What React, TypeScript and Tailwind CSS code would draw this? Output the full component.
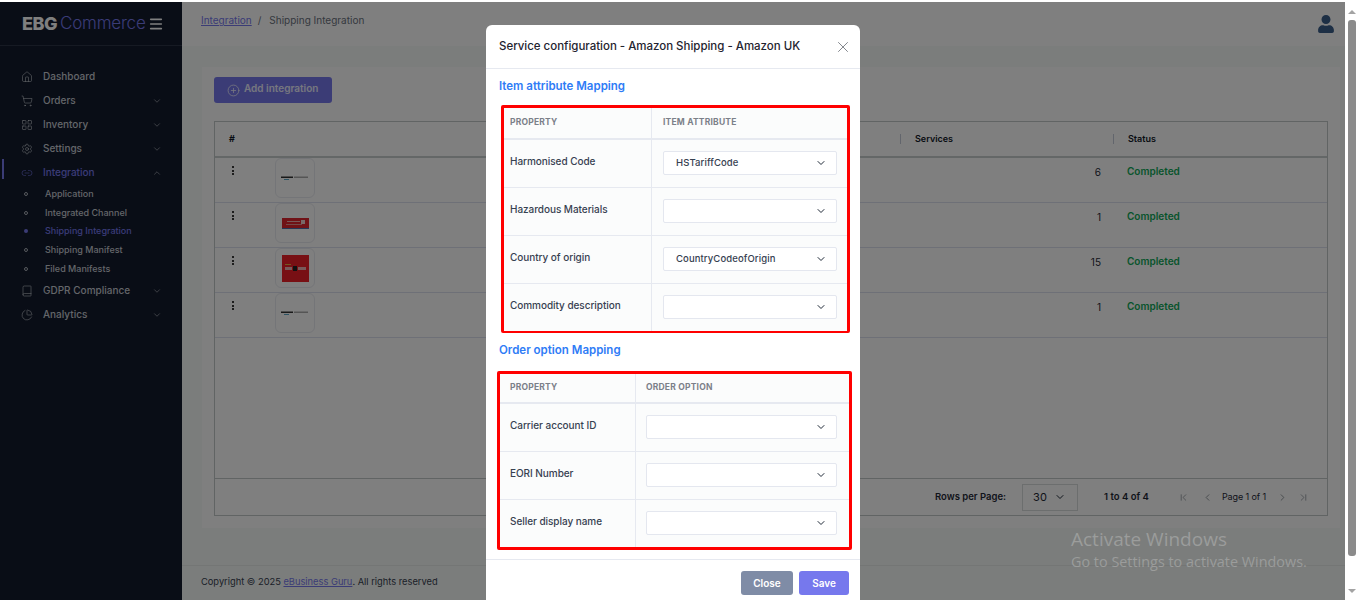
import {
  Book,
  ChevronDown,
  ChevronFirst,
  ChevronLast,
  ChevronLeft,
  ChevronRight,
  ChevronUp,
  CirclePlus,
  House,
  LayoutGrid,
  Link2,
  Menu,
  PieChart,
  Settings,
  ShoppingCart,
  X,
} from "lucide-react";
import { FaUser } from "react-icons/fa";

const font = "font-['Inter','Noto_Sans',sans-serif]";

const subItems = [
  { label: "Application", h: "h-[19px]" },
  { label: "Integrated Channel", h: "h-[19px]" },
  { label: "Shipping Integration", h: "h-[18px]", active: true },
  { label: "Shipping Manifest", h: "h-[19px]" },
  { label: "Filed Manifests", h: "h-[19px]" },
];

const NavItem = ({ icon: Icon, label, chevron, active }: any) => (
  <div className="relative flex h-6 items-center pl-[21px] pr-[20px]">
    {active && <div className="absolute -top-[2px] left-[2px] h-5 w-[2px] bg-[#7678ed]" />}
    <Icon size={12} strokeWidth={1.2} className={active ? "text-[#7678ed]" : "text-[#c8ccd4]"} />
    <span className={`ml-[10px] -mt-[2px] flex-1 text-[10px] font-medium ${active ? "text-[#7678ed]" : "text-[#c8ccd4]"}`}>
      {label}
    </span>
    {chevron === "down" && <ChevronDown size={10} className="text-[#8b909c]" />}
    {chevron === "up" && <ChevronUp size={10} className="text-[#8b909c]" />}
  </div>
);

const Sidebar = () => (
  <div className="flex w-[182px] shrink-0 flex-col bg-[#121a2c]">
    <div className="flex h-[44px] items-center border-b border-[#2c3446] pl-[22px] pr-[18px]">
      <span className="text-[18px] font-extrabold tracking-[-0.5px] text-white">EBG</span>
      <span className="ml-[3px] flex-1 text-[17px] font-light tracking-[-0.2px] text-[#7678ed]">Commerce</span>
      <Menu size={16} strokeWidth={2.4} className="text-white" />
    </div>
    <div className="mt-[19px] flex flex-col">
      <NavItem icon={House} label="Dashboard" />
      <NavItem icon={ShoppingCart} label="Orders" chevron="down" />
      <NavItem icon={LayoutGrid} label="Inventory" chevron="down" />
      <NavItem icon={Settings} label="Settings" chevron="down" />
      <NavItem icon={Link2} label="Integration" chevron="up" active />
      <div className="-mt-[1px] mb-[1px] flex flex-col">
        {subItems.map((s) => (
          <div key={s.label} className={`flex items-center pl-[24px] ${s.h}`}>
            <span className={`h-[4px] w-[4px] rounded-full ${s.active ? "bg-[#7678ed]" : "border border-[#b0b4be]"}`} />
            <span className={`ml-[17px] text-[9px] font-medium ${s.active ? "text-[#7678ed]" : "text-[#c8ccd4]"}`}>
              {s.label}
            </span>
          </div>
        ))}
      </div>
      <NavItem icon={Book} label="GDPR Compliance" chevron="down" />
      <NavItem icon={PieChart} label="Analytics" chevron="down" />
    </div>
  </div>
);

const AmazonLogo = () => (
  <svg width="28" height="5" viewBox="0 0 28 5">
    <rect x="0" y="0.5" width="12" height="1.5" fill="#333" />
    <rect x="13" y="0.5" width="14" height="1.5" fill="#aaa" />
    <rect x="3" y="3" width="5" height="1" fill="#5aa7c7" />
  </svg>
);

const BannerLogo = () => (
  <svg width="27" height="11" viewBox="0 0 27 11">
    <rect width="27" height="11" fill="#e0242e" />
    <rect y="10" width="27" height="1" fill="#4a6fb0" />
    <rect x="5" y="3" width="13" height="1" fill="#eeb0b0" />
    <rect x="19" y="2" width="4" height="4" fill="#f3d0d0" />
    <rect x="4" y="6" width="16" height="1" fill="#e59090" />
  </svg>
);

const DropLogo = () => (
  <svg width="27" height="27" viewBox="0 0 27 27">
    <rect width="27" height="27" fill="#f02028" />
    <rect x="3" y="12" width="7" height="3" fill="#f0b4b4" />
    <rect x="11" y="11" width="4" height="5" fill="#222" />
    <rect x="16" y="12" width="8" height="3" fill="#f0b4b4" />
    <rect x="3" y="9" width="6" height="1" fill="#e8b040" />
  </svg>
);

const rows = [
  { logo: <AmazonLogo />, count: "6" },
  { logo: <BannerLogo />, count: "1" },
  { logo: <DropLogo />, count: "15" },
  { logo: <AmazonLogo />, count: "1" },
];

const cols = "grid grid-cols-[47px_212px_426px_213px_1fr]";

const HeadCell = ({ label }: { label?: string }) => (
  <div className="flex h-full items-center">
    <span className="h-[10px] w-px bg-[#c5cbd8]" />
    <span className="ml-[14px] text-[9px] font-semibold text-[#111827]">{label}</span>
  </div>
);

const DataTable = () => (
  <div className="mx-3 mt-[18px] flex h-[395px] flex-col border border-[#c2c8c8]">
    <div className={`${cols} h-[36px] border-b-2 border-[#c9cfcf]`}>
      <div className="flex items-center pl-[14px] text-[9px] font-bold text-[#111827]">#</div>
      <div />
      <div />
      <HeadCell label="Services" />
      <HeadCell label="Status" />
    </div>
    <div className="flex-1">
      {rows.map((r, i) => (
        <div key={i} className={`${cols} h-[45px] border-b border-[#dde1ee]`}>
          <div className="pl-[17px] pt-[8px]">
            <div className="flex w-[2px] flex-col gap-[1.5px]">
              <span className="h-[2px] w-[2px] bg-[#3a3a3a]" />
              <span className="h-[2px] w-[2px] bg-[#3a3a3a]" />
              <span className="h-[2px] w-[2px] bg-[#3a3a3a]" />
            </div>
          </div>
          <div className="pl-[13px]">
            <div className="flex h-[40px] w-[40px] items-center justify-center rounded-md border border-[#e9ebf0] bg-white">
              {r.logo}
            </div>
          </div>
          <div />
          <div className="pr-[12px] pt-[8px] text-right text-[10px] leading-[13px] text-[#1f2937]">{r.count}</div>
          <div className="pl-[14px] pt-[7px] text-[10px] font-semibold leading-[13px] text-[#0fa958]">Completed</div>
        </div>
      ))}
    </div>
    <div className="flex h-[37px] items-center justify-end border-t border-[#c2c8c8] pr-[18px] text-[9.5px] text-[#1f2937]">
      <span className="font-semibold">Rows per Page:</span>
      <div className="ml-[16px] flex h-[27px] w-[56px] items-center justify-between border border-[#d8dcdc] pl-[10px] pr-[11px] text-[11px]">
        30 <ChevronDown size={12} />
      </div>
      <span className="ml-[26px] font-semibold">1 to 4 of 4</span>
      <ChevronFirst size={11} className="ml-[29px] text-[#9aa0a6]" />
      <ChevronLeft size={11} className="ml-[13px] text-[#8a9096]" />
      <span className="ml-[9px] text-[9px] tracking-[-0.1px]">Page 1 of 1</span>
      <ChevronRight size={11} className="ml-[11px] text-[#8a9096]" />
      <ChevronLast size={11} className="ml-[10px] text-[#9aa0a6]" />
    </div>
  </div>
);

const Select = ({ value }: { value?: string }) => (
  <div className="mt-[11px] flex h-6 items-center justify-between rounded-[2px] border border-[#e4e7ef] bg-white pl-3 pr-[9px]">
    <span className="text-[9.5px] font-medium tracking-[0.1px] text-[#374151]">{value}</span>
    <ChevronDown size={12} className="text-[#1f2937]" />
  </div>
);

const MappingRow = ({ label, value, left, right }: any) => (
  <div className="flex h-12 border-t border-[#e6e9f0] first:border-t-0">
    <div className={`border-r border-[#e6e9f0] pt-[14px] text-[10px] font-medium leading-[14px] tracking-[-0.05px] text-[#374151] ${left}`}>{label}</div>
    <div className={`flex-1 ${right}`}>
      <Select value={value} />
    </div>
  </div>
);

const HeadRow = ({ label, left, right, h }: any) => (
  <div className={`flex border-b border-[#e6e9f0] text-[8.5px] font-bold tracking-[0.2px] text-[#7b8089] ${h}`}>
    <div className={`flex items-center border-r border-[#e6e9f0] pb-[2px] ${left}`}>PROPERTY</div>
    <div className={`flex flex-1 items-center pb-[2px] ${right}`}>{label}</div>
  </div>
);

const Modal = () => (
  <div className={`absolute left-[486px] top-[25px] w-[374px] rounded-t-md bg-white ${font}`}>
    <div className="flex h-[44px] items-center justify-between border-b border-[#e6e9f0] pl-[13px] pr-[8px]">
      <span className="text-[11.5px] font-medium tracking-[-0.02px] text-[#1f2430]">Service configuration - Amazon Shipping - Amazon UK</span>
      <X size={18} strokeWidth={1} className="text-[#5b6068]" />
    </div>
    <div className="pl-[13px] pt-[9px] text-[11.5px] font-semibold leading-[16px] text-[#2f7cf6]">Item attribute Mapping</div>
    <div className="ml-[15px] mr-[10px] mt-[11px] rounded-[2px] border-x-[3px] border-b-[2px] border-t-[3px] border-[#ff0000] bg-[#fbfcfc]">
      <HeadRow label="ITEM ATTRIBUTE" left="w-[148px] pl-[6px]" right="pl-[11px]" h="h-[31px]" />
      <MappingRow label="Harmonised Code" value="HSTariffCode" left="w-[148px] pl-[6px]" right="pl-[11px] pr-[10px]" />
      <MappingRow label="Hazardous Materials" left="w-[148px] pl-[6px]" right="pl-[11px] pr-[10px]" />
      <MappingRow label="Country of origin" value="CountryCodeofOrigin" left="w-[148px] pl-[6px]" right="pl-[11px] pr-[10px]" />
      <MappingRow label="Commodity description" left="w-[148px] pl-[6px]" right="pl-[11px] pr-[10px]" />
    </div>
    <div className="pl-[13px] pt-[9px] text-[11.5px] font-semibold leading-[16px] text-[#2f7cf6]">Order option Mapping</div>
    <div className="ml-[11px] mr-[8px] mt-[13px] rounded-[2px] border-[3px] border-[#ff0000] bg-[#fbfcfc]">
      <HeadRow label="ORDER OPTION" left="w-[136px] pl-[10px]" right="pl-[10px]" h="h-[29px]" />
      <MappingRow label="Carrier account ID" left="w-[136px] pl-[10px]" right="pl-[10px] pr-[12px]" />
      <MappingRow label="EORI Number" left="w-[136px] pl-[10px]" right="pl-[10px] pr-[12px]" />
      <MappingRow label="Seller display name" left="w-[136px] pl-[10px]" right="pl-[10px] pr-[12px]" />
    </div>
    <div className="mt-[9px] flex h-[60px] justify-end gap-[6px] border-t border-[#e6e9f0] pr-[11px] pt-[11px]">
      <button type="button" className="h-6 w-[52px] rounded-[3px] bg-[#7f8ca6] text-[10px] font-semibold text-white">Close</button>
      <button type="button" className="h-6 w-[50px] rounded-[3px] bg-[#7678ed] text-[10px] font-semibold text-white">Save</button>
    </div>
  </div>
);

const Scrollbar = () => (
  <div className="flex w-[11px] shrink-0 flex-col items-end bg-white pt-[8px]">
    <div className="h-0 w-0 border-x-[4px] border-b-[4px] border-x-transparent border-b-[#a3a3a3]" />
    <div className="mt-[6px] h-[536px] w-[8px] rounded-[3px] bg-[#8b8b8b]" />
    <div className="mt-[33px] h-0 w-0 border-x-[4px] border-t-[4px] border-x-transparent border-t-[#a3a3a3]" />
  </div>
);

export default function App() {
  return (
    <div className={`relative flex h-[600px] w-[1356px] overflow-hidden bg-white pt-[2px] ${font}`}>
      <div className="relative flex w-[1345px] shrink-0">
        <Sidebar />
        <div className="flex flex-1 flex-col bg-[#f6fbf8]">
          <div className="flex h-[44px] items-start justify-between bg-white pl-[19px] pr-[10px]">
            <div className="mt-[11px] flex text-[10px] leading-[14px] text-[#6b7280]">
              <span className="text-[#7678ed] underline">Integration</span>
              <span className="ml-[6px] mr-[8px]">/</span>
              <span>Shipping Integration</span>
            </div>
            <FaUser size={18} className="mt-[13px] text-[#3a5e8a]" />
          </div>
          <div className="ml-5 mr-[5px] mt-[21px] h-[461px] bg-white pt-[10px]">
            <button type="button" className="ml-3 flex h-[26px] w-[118px] items-center rounded-[3px] bg-[#7678ed] pl-[13px] text-[10px] font-semibold text-[#eceeff]">
              <CirclePlus size={13} strokeWidth={1.5} />
              <span className="ml-[4px] -mt-[3px]">Add integration</span>
            </button>
            <DataTable />
          </div>
          <div className="mt-[37px] flex-1 border-t border-[#e8ecea] pl-[19px] pt-[9px] text-[9.3px] leading-[13px] text-[#374151]">
            Copyright © 2025 <span className="text-[#7678ed] underline">eBusiness Guru</span>. All rights reserved
          </div>
        </div>
        <div className="absolute inset-0 bg-black/50" />
      </div>
      <Scrollbar />
      <div className="absolute left-[1071px] top-[527px] font-['Open_Sans',sans-serif] text-white/25">
        <div className="text-[19px] leading-[24px]">Activate Windows</div>
        <div className="text-[14.4px] leading-[22px]">Go to Settings to activate Windows.</div>
      </div>
      <Modal />
    </div>
  );
}
